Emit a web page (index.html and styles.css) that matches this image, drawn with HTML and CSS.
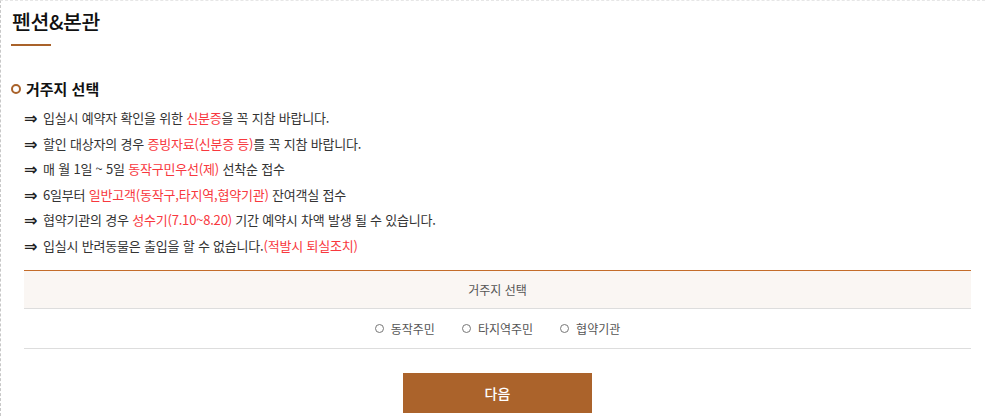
FILE: index.html
```html
<!DOCTYPE html>
<html lang="ko">
<head>
<meta charset="utf-8">
<link rel="stylesheet" href="styles.css">
</head>
<body>
<div class="page">
  <h1 class="title">펜션&amp;본관</h1>
  <div class="title-bar"></div>

  <h2 class="sec-head"><span class="ring"></span>거주지 선택</h2>
  <ul class="notes">
    <li><span class="arr">⇒</span>입실시 예약자 확인을 위한 <em>신분증</em>을 꼭 지참 바랍니다.</li>
    <li><span class="arr">⇒</span>할인 대상자의 경우 <em>증빙자료(신분증 등)</em>를 꼭 지참 바랍니다.</li>
    <li><span class="arr">⇒</span>매 월 1일 ~ 5일 <em>동작구민우선(제)</em> 선착순 접수</li>
    <li><span class="arr">⇒</span>6일부터 <em>일반고객(동작구,타지역,협약기관)</em> 잔여객실 접수</li>
    <li><span class="arr">⇒</span>협약기관의 경우 <em>성수기(7.10~8.20)</em> 기간 예약시 차액 발생 될 수 있습니다.</li>
    <li><span class="arr">⇒</span>입실시 반려동물은 출입을 할 수 없습니다.<em>(적발시 퇴실조치)</em></li>
  </ul>

  <div class="tbl">
    <div class="tbl-head">거주지 선택</div>
    <div class="tbl-row">
      <label class="opt"><span class="radio"></span>동작주민</label>
      <label class="opt"><span class="radio"></span>타지역주민</label>
      <label class="opt"><span class="radio"></span>협약기관</label>
    </div>
  </div>

  <div class="btn-wrap"><button class="btn">다음</button></div>
</div>
</body>
</html>
```

FILE: styles.css
```css
html, body {
  margin: 0;
  padding: 0;
  background: #fff;
}
body {
  font-family: "Noto Sans CJK KR", "Noto Sans", sans-serif;
  color: #333;
  width: 985px;
  height: 416px;
  overflow: hidden;
}
.page {
  box-sizing: border-box;
  height: 416px;
  border-left: 1px dashed #c8c8c8;
  border-top: 1px dashed #e6e6e6;
  padding: 0 14px 0 10px;
}
.title {
  margin: 0;
  padding: 5px 0 0 1px;
  font-size: 20.5px;
  line-height: 30px;
  font-weight: 500;
  color: #111;
  letter-spacing: -0.4px;
}
.title-bar {
  width: 40px;
  height: 2px;
  background: #a9622a;
  margin-top: 8px;
}
.sec-head {
  margin: 32px 0 0 0;
  display: flex;
  align-items: center;
  font-size: 15px;
  line-height: 22px;
  font-weight: 700;
  color: #111;
}
.ring {
  box-sizing: border-box;
  width: 10px;
  height: 10px;
  border: 2.5px solid #a9622a;
  border-radius: 50%;
  margin-right: 5px;
}
.notes {
  list-style: none;
  margin: 5px 0 0 0;
  padding: 0 0 0 13px;
  font-size: 13px;
  line-height: 25.6px;
  color: #333;
  letter-spacing: -0.2px;
}
.notes em {
  font-style: normal;
  color: #f8383e;
}
.arr {
  display: inline-block;
  width: 19px;
  font-family: "DejaVu Sans", sans-serif;
  font-weight: 700;
  font-size: 16px;
  line-height: 10px;
  vertical-align: -1px;
  color: #222;
}
.tbl {
  margin: 11px 0 0 13px;
  border-top: 1px solid #c46c2a;
}
.tbl-head {
  background: #faf6f3;
  border-bottom: 1px solid #dddddd;
  height: 37px;
  line-height: 37px;
  text-align: center;
  font-size: 12px;
  color: #555;
}
.tbl-row {
  height: 39px;
  border-bottom: 1px solid #dddddd;
  display: flex;
  justify-content: center;
  align-items: center;
  gap: 27px;
  font-size: 12px;
  color: #555;
}
.opt {
  display: flex;
  align-items: center;
}
.radio {
  box-sizing: border-box;
  width: 9px;
  height: 9px;
  border: 1px solid #777;
  border-radius: 50%;
  margin-right: 7px;
}
.btn-wrap {
  display: flex;
  justify-content: center;
  margin-top: 24px;
  padding-left: 13px;
}
.btn {
  width: 189px;
  height: 40px;
  border: 0;
  background: #ab632b;
  color: #fff;
  font-family: "Noto Sans CJK KR", sans-serif;
  font-size: 14px;
  font-weight: 500;
  padding: 0;
}
```
